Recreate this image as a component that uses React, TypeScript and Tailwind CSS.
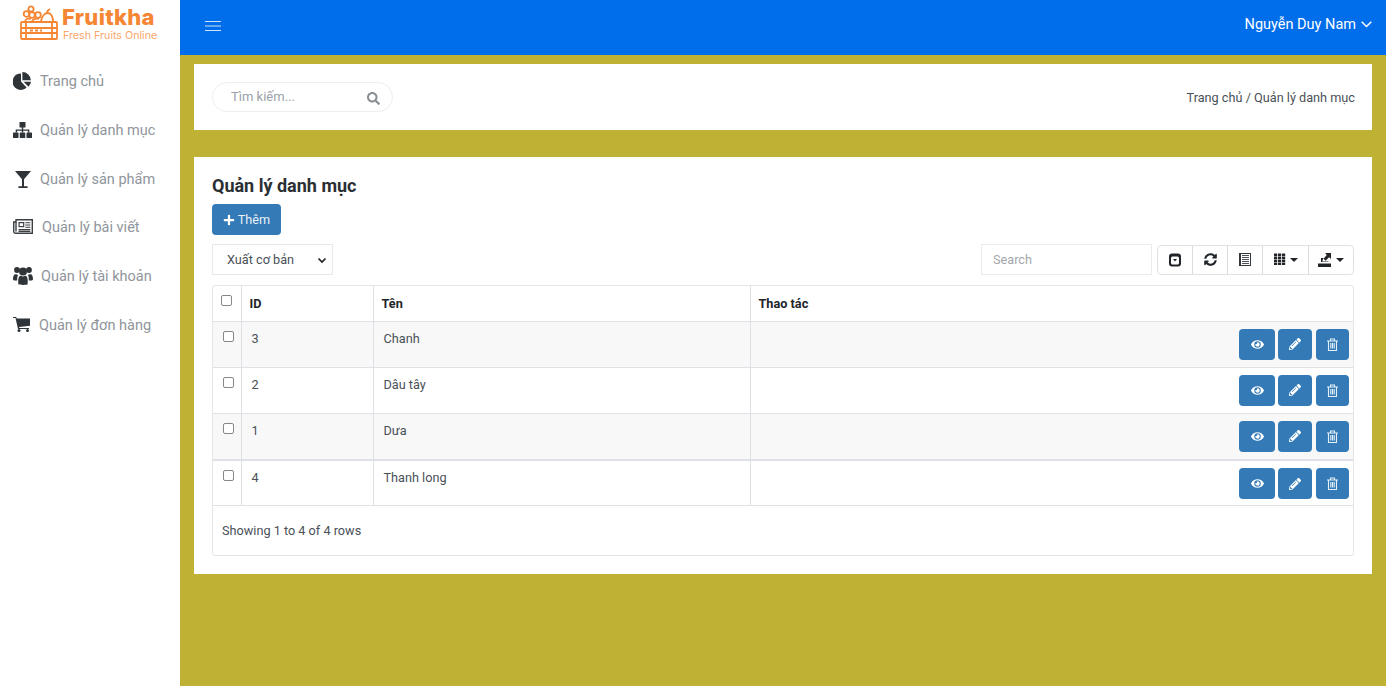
import { FaEye, FaPencilAlt, FaPlus, FaSearch, FaSyncAlt } from "react-icons/fa";
import type { ReactNode } from "react";

const PieIcon = () => (
  <svg width="19" height="18" viewBox="0 0 19 18" fill="#2f3438">
    <path d="M8 1.500V9.600l5.600 5.800A8.200 8.200 0 1 1 8 1.500Z" />
    <path d="M9.400 0a8.600 8.600 0 0 1 8.500 8.200H9.400Z" />
    <path d="M10.600 9.700H18a8 8 0 0 1-2.600 5Z" />
  </svg>
);

const SitemapIcon = () => (
  <svg width="19" height="16" viewBox="0 0 19 16" fill="#2f3438">
    <rect x="6.500" y="0" width="6" height="5.500" rx="0.600" />
    <rect x="0" y="10.500" width="5.500" height="5.500" rx="0.600" />
    <rect x="6.750" y="10.500" width="5.500" height="5.500" rx="0.600" />
    <rect x="13.500" y="10.500" width="5.500" height="5.500" rx="0.600" />
    <path d="M8.800 5h1.400v2.400h6.100v3.200h-1.400V8.800h-4.700v1.800H8.800V8.800H4.100v1.800H2.700V7.400h6.100Z" />
  </svg>
);

const GlassIcon = () => (
  <svg width="16" height="17" viewBox="0 0 16 17" fill="#2f3438">
    <path d="M0 0h16L9 8.200v7h3.600V17H3.400v-1.800H7v-7Z" />
  </svg>
);

const NewsIcon = () => (
  <svg width="20" height="15" viewBox="0 0 20 15" fill="none" stroke="#3a3f44" strokeWidth="1.400">
    <path d="M3 .7h16.300v13.600H2.400A1.700 1.700 0 0 1 .7 12.600V3H3Z" />
    <path d="M3 3v9.500" />
    <rect x="5.500" y="3" width="5.800" height="5.200" fill="#3a3f44" stroke="none" />
    <rect x="6.700" y="4.200" width="3.400" height="2.800" fill="#fff" stroke="none" />
    <path d="M12.300 3.700h5M12.300 6h5M12.300 8.300h5M5.500 10.600h11.800M5.500 12.400h11.800" strokeWidth="1.100" />
  </svg>
);

const UsersIcon = () => (
  <svg width="20" height="20" viewBox="0 0 20 20" fill="#2f3438">
    <circle cx="4" cy="5" r="2.900" />
    <circle cx="16" cy="5" r="2.900" />
    <circle cx="10" cy="6.500" r="4" />
    <path d="M0 14.500c0-3.200.8-5.200 2.600-5.200 1 0 1.600.5 2.500.8-.7 1.300-1 3-.9 5.400C1.800 15.500 0 15.500 0 14.500Z" />
    <path d="M20 14.500c0-3.200-.8-5.200-2.600-5.200-1 0-1.600.5-2.500.8.7 1.300 1 3 .9 5.400 2.400 0 4.200 0 4.200-1Z" />
    <path d="M5.500 19.500c-.8-5 .2-8.700 2-8.700.7 0 1.300.7 2.500.7s1.800-.7 2.500-.7c1.800 0 2.800 3.700 2 8.700-.5.5-8.500.5-9 0Z" />
  </svg>
);

const CartIcon = () => (
  <svg width="17" height="15" viewBox="0 0 17 15" fill="#2f3438">
    <path d="M0 0h3.200l.5 1.600H17v7.200l-11 1.200.3 1H16v1H5L2.500 1H0Z" />
    <circle cx="6" cy="13.500" r="1.500" />
    <circle cx="14.500" cy="13.500" r="1.500" />
  </svg>
);

const menu = [
  { label: "Trang chủ", icon: <PieIcon />, box: "w-[19px] mb-[2px]", h: "h-[49px]" },
  { label: "Quản lý danh mục", icon: <SitemapIcon />, box: "w-[19px] mb-[2px]", h: "h-[49px]" },
  { label: "Quản lý sản phẩm", icon: <GlassIcon />, box: "w-[19px] pl-[2px]", h: "h-[49px]" },
  { label: "Quản lý bài viết", icon: <NewsIcon />, box: "w-[21px] mb-[4px]", h: "h-[48px]" },
  { label: "Quản lý tài khoản", icon: <UsersIcon />, box: "w-[20px] mb-[4px]", h: "h-[49px]" },
  { label: "Quản lý đơn hàng", icon: <CartIcon />, box: "w-[18px] mb-[2px]", h: "h-[49px]" },
];

const rows = [
  { id: 3, name: "Chanh" },
  { id: 2, name: "Dâu tây" },
  { id: 1, name: "Dưa" },
  { id: 4, name: "Thanh long" },
];

function Logo() {
  return (
    <div className="flex items-start h-[40px] pl-[20px] pt-[5px]">
      <svg width="38" height="35" viewBox="0 0 38 35" fill="none" stroke="#f58634" strokeWidth="1.800" className="shrink-0">
        <circle cx="11" cy="4" r="2.600" />
        <circle cx="6.500" cy="9" r="2.800" />
        <circle cx="12" cy="10" r="2.800" />
        <circle cx="18" cy="10" r="2.800" />
        <path d="M5 17c0-3 3-4 6-3M12 17c0-2 3-4 7-3" />
        <path d="M21 16c1-5 4-8 7-8 3 0 5 4 5 8" />
        <path d="M27 8c0-2 1-3 3-4" />
        <rect x="1" y="17" width="36" height="17" rx="1" />
        <path d="M1 23h36M1 28h36M6 17v17M32 17v17" />
        <path d="M10 25.500h12" strokeDasharray="3 2" />
      </svg>
      <div className="ml-[4px] font-['Inter',sans-serif] leading-none">
        <div className="text-[22px] font-extrabold tracking-[0.3px] mt-[1px] text-[#f58634]">Fruitkha</div>
        <div className="text-[10.7px] mt-[3px] ml-[1px] text-[#f9a66c]">Fresh Fruits Online</div>
      </div>
    </div>
  );
}

function Sidebar() {
  return (
    <aside className="w-[180px] shrink-0 bg-white">
      <Logo />
      <nav className="mt-[17px] pl-[13px]">
        {menu.map((item) => (
          <div key={item.label} className={`flex items-center gap-[8px] ${item.h} text-[14.5px] text-[#8f959b]`}>
            <span className={`${item.box} shrink-0 flex items-center`}>{item.icon}</span>
            {item.label}
          </div>
        ))}
      </nav>
    </aside>
  );
}

function ActionBtn({ children, w }: { children: ReactNode; w: string }) {
  return (
    <button className={`${w} h-[31px] flex items-center justify-center rounded-[4px] bg-[#337ab7] text-white`}>
      {children}
    </button>
  );
}

function ToolBtn({ children, w, last }: { children: ReactNode; w: string; last?: boolean }) {
  return (
    <button className={`${w} h-full flex items-center justify-center text-[#212529] ${last ? "" : "border-r border-[#ddd]"}`}>
      {children}
    </button>
  );
}

function Caret() {
  return <span className="ml-[4px] border-x-[4px] border-x-transparent border-t-[4px] border-t-[#212529]" />;
}

function Check() {
  return <span className="block w-[11px] h-[11px] rounded-[2px] border border-[#85888a] bg-white" />;
}

export default function App() {
  return (
    <div className="flex h-[686px] overflow-hidden font-['Roboto',sans-serif] text-[12.7px] text-[#495057]">
      <Sidebar />
      <div className="flex-1 min-w-0 bg-[#bfb134]">
        <header className="h-[55px] bg-[#006eeb] flex items-center justify-between pl-[25px] pr-[14px] text-white">
          <svg width="16" height="11" viewBox="0 0 16 11" stroke="#cfe3fb" strokeWidth="1" className="mb-[2px]">
            <path d="M0 .5h16M0 5h16M0 9.500h16" />
          </svg>
          <div className="flex items-center gap-[5px] text-[14.5px] mb-[6px]">
            <span className="ml-[1px]">Nguyễn Duy Nam</span>
            <svg width="11" height="7" viewBox="0 0 11 7" fill="none" stroke="#fff" strokeWidth="1.500">
              <path d="M.7.8 5.500 5.500 10.300.8" />
            </svg>
          </div>
        </header>

        <div className="pl-[14px] pr-[14px] pt-[9px]">
          <section className="h-[66px] bg-white flex items-center justify-between pl-[18px] pr-[17px]">
            <div className="w-[181px] h-[30px] rounded-full border border-[#eceef0] flex items-center justify-between pl-[18px] pr-[12px]">
              <span className="text-[13px] text-[#9aa1a8] mb-[1px]">Tìm kiếm...</span>
              <FaSearch className="w-[13px] h-[13px] text-[#8a8f94] mt-[3px]" />
            </div>
            <div className="text-[#495057] mt-[2px]">Trang chủ / Quản lý danh mục</div>
          </section>

          <section className="mt-[27px] h-[417px] bg-white px-[18px] pt-[18px]">
            <h1 className="text-[18px] font-bold leading-[22px] text-[#2b2f33]">Quản lý danh mục</h1>
            <button className="mt-[7px] w-[69px] h-[31px] rounded-[4px] bg-[#337ab7] text-white flex items-center justify-center gap-[3px]">
              <FaPlus className="w-[12px] h-[12px]" />
              <span className="text-[#e9f1f8]">Thêm</span>
            </button>

            <div className="mt-[9px] h-[31px] flex items-center justify-between">
              <div className="w-[121px] h-[31px] border border-[#e6e8ea] flex items-center justify-between pl-[14px] pr-[4px]">
                Xuất cơ bản
                <svg width="12" height="12" viewBox="0 0 12 12" fill="none" stroke="#222" strokeWidth="1.700">
                  <path d="M2.500 4.500 6 8l3.500-3.500" />
                </svg>
              </div>
              <div className="flex items-center h-[31px]">
                <div className="w-[171px] h-[31px] border border-[#e9ebed] pl-[11px] flex items-center text-[#a2a7ac]">Search</div>
                <div className="ml-[5px] w-[197px] h-[30px] flex border border-[#dee2e6] rounded-[4px]">
                  <ToolBtn w="w-[35px]">
                    <svg width="12" height="14" viewBox="0 0 12 14">
                      <rect x="0" y="0.500" width="12" height="13" rx="3" fill="#212529" />
                      <rect x="2" y="3.500" width="8" height="8" rx="1.500" fill="#fff" />
                      <path d="M4 6h4L6 8.500z" fill="#212529" />
                    </svg>
                  </ToolBtn>
                  <ToolBtn w="w-[35px]"><FaSyncAlt className="w-[13px] h-[13px]" /></ToolBtn>
                  <ToolBtn w="w-[35px]">
                    <svg width="12" height="13" viewBox="0 0 12 13" fill="none" stroke="#33383c">
                      <rect x="0.500" y="0.500" width="11" height="12" fill="#fff" />
                      <path d="M3 2.500h7M3 4.500h7M3 6.500h7M3 8.500h7M3 10.500h7" stroke="#4a5055" />
                      <path d="M1.500 .5v12" />
                    </svg>
                  </ToolBtn>
                  <ToolBtn w="w-[46px]">
                    <svg width="12" height="13" viewBox="0 0 12 13" fill="#212529">
                      {[0, 4, 8].map((x) =>
                        [0, 3, 6, 9].map((y) => <rect key={`${x}-${y}`} x={x} y={y + 0.5} width="3.200" height="2.500" />),
                      )}
                    </svg>
                    <Caret />
                  </ToolBtn>
                  <ToolBtn w="w-[44px]" last>
                    <svg width="14" height="14" viewBox="0 0 14 14" fill="#212529">
                      <path d="M7 0h6v6l-2-1.800-3.300 3.600-2.200-2 3.300-3.800Z" />
                      <path d="M3 5h2.500L4.200 8.500h6.300V9H3Z" />
                      <path d="M0 10.500h13V14H0Z" />
                    </svg>
                    <Caret />
                  </ToolBtn>
                </div>
              </div>
            </div>

            <div className="mt-[10px] h-[271px] border border-[#e3e5e7] rounded-[3px] overflow-hidden">
              <table className="w-full table-fixed border-collapse">
                <colgroup>
                  <col className="w-[28px]" />
                  <col className="w-[132px]" />
                  <col className="w-[377px]" />
                  <col />
                </colgroup>
                <thead>
                  <tr className="h-[35px] border-b border-[#dee2e6] text-[#212529]">
                    <th className="border-r border-[#dee2e6] pl-[8px] align-top pt-[9px]"><Check /></th>
                    <th className="border-r border-[#dee2e6] text-left pl-[8px] font-bold">ID</th>
                    <th className="border-r border-[#dee2e6] text-left pl-[8px] font-bold">Tên</th>
                    <th className="text-left pl-[8px] font-bold">Thao tác</th>
                  </tr>
                </thead>
                <tbody>
                  {rows.map((row, i) => (
                    <tr
                      key={row.id}
                      className={`${i === 2 ? "h-[47px] border-b-2" : i === 3 ? "h-[45px] border-b" : "h-[46px] border-b"} ${i % 2 === 0 ? "bg-[#f8f8f8]" : "bg-white"} border-[#dee2e6]`}
                    >
                      <td className="border-r border-[#dee2e6] pl-[10px] align-top pt-[9px]"><Check /></td>
                      <td className="border-r border-[#dee2e6] pl-[10px] align-top pt-[7px]">{row.id}</td>
                      <td className="border-r border-[#dee2e6] pl-[10px] align-top pt-[7px]">{row.name}</td>
                      <td className="pr-[4px] align-top pt-[7px]">
                        <div className="flex justify-end">
                          <ActionBtn w="w-[36px]"><FaEye className="w-[13px] h-[13px]" /></ActionBtn>
                          <div className="ml-[3px]">
                            <ActionBtn w="w-[34px]"><FaPencilAlt className="w-[12px] h-[12px]" /></ActionBtn>
                          </div>
                          <div className="ml-[4px]">
                            <ActionBtn w="w-[33px]">
                              <svg width="11" height="13" viewBox="0 0 11 13" fill="none" stroke="#e6f0f8" strokeWidth="1.100">
                                <path d="M0 3h11M3.500 3V1h4v2M1.500 3v9.500h8V3M3.800 5v5.500M5.500 5v5.500M7.200 5v5.500" />
                              </svg>
                            </ActionBtn>
                          </div>
                        </div>
                      </td>
                    </tr>
                  ))}
                </tbody>
              </table>
              <div className="h-[50px] flex items-center pl-[9px]">Showing 1 to 4 of 4 rows</div>
            </div>
          </section>
        </div>
      </div>
    </div>
  );
}
